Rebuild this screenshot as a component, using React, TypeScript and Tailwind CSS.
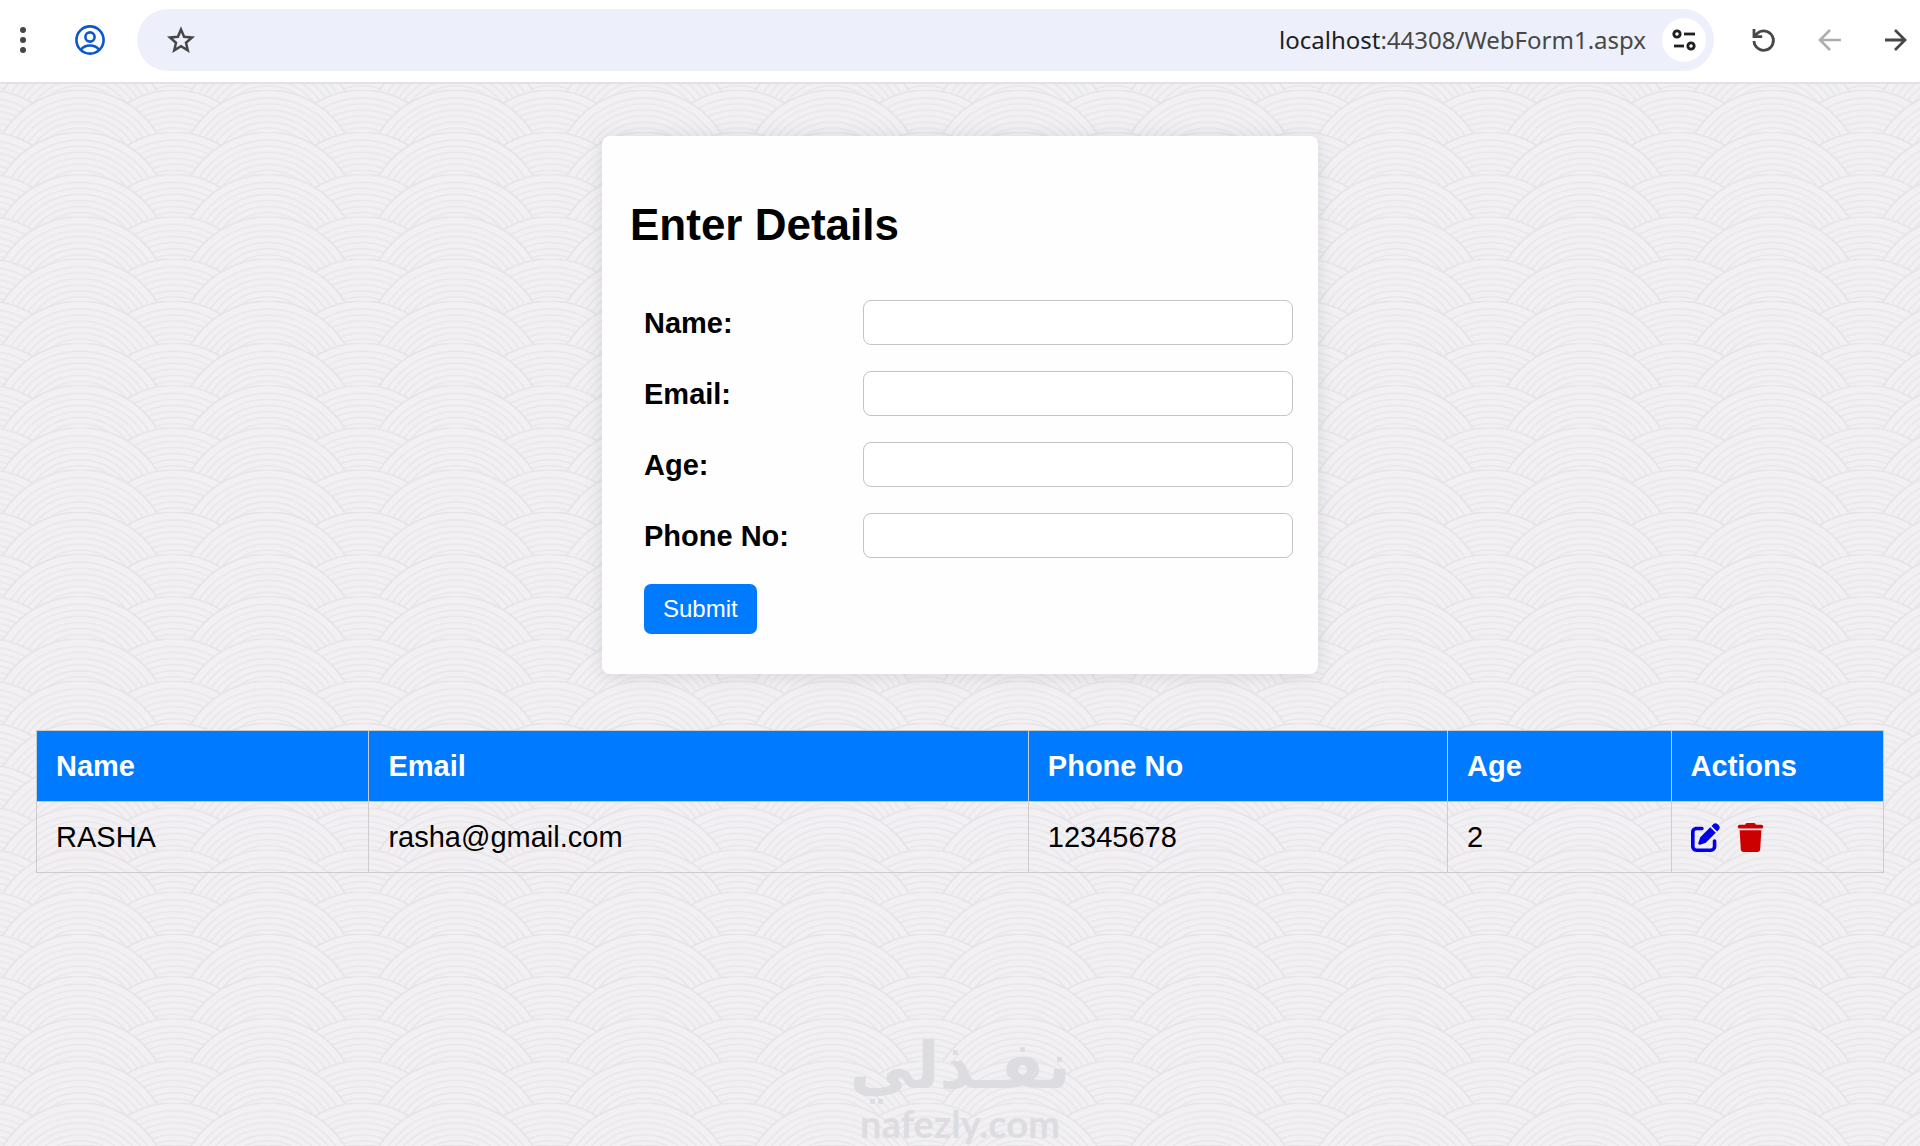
import { useState } from 'react'
import { FaPenToSquare, FaTrash } from 'react-icons/fa6'

const fields = [
  { id: 'name', label: 'Name:', type: 'text' },
  { id: 'email', label: 'Email:', type: 'email' },
  { id: 'age', label: 'Age:', type: 'text' },
  { id: 'phone', label: 'Phone No:', type: 'tel' },
];

const people = [
  { name: 'RASHA', email: 'rasha@gmail.com', phone: '12345678', age: 2 },
];

const TILE_W = 188;
const TILE_H = 42.2;
const RINGS = [90, 82, 76, 70, 64, 58, 52, 46, 40];

const Wave = ({ cx, top }: { cx: number; top: number }) => (
  <g>
    {RINGS.map((r, i) => (
      <circle
        key={r}
        cx={cx}
        cy={top + 90}
        r={r}
        fill={i === 0 ? '#f2f0f2' : 'none'}
        stroke={i === 0 ? '#e4e3e5' : '#e8e7e9'}
        strokeWidth={1.6}
      />
    ))}
  </g>
);

const WaveBackground = () => (
  <svg className="absolute inset-0 w-full h-full" aria-hidden="true">
    <defs>
      <pattern id="waves" x="-14" y="6" width={TILE_W} height={TILE_H} patternUnits="userSpaceOnUse">
        {[-4, -3, -2, -1, 0].map(row => (
          <g key={row}>
            <Wave cx={0} top={row * TILE_H} />
            <Wave cx={TILE_W} top={row * TILE_H} />
            <Wave cx={-TILE_W / 2} top={row * TILE_H} />
            <Wave cx={TILE_W / 2} top={row * TILE_H} />
            <Wave cx={TILE_W * 1.5} top={row * TILE_H} />
          </g>
        ))}
      </pattern>
    </defs>
    <rect width="100%" height="100%" fill="url(#waves)" />
  </svg>
);

const Toolbar = () => (
  <header className="flex items-center h-[84px] pb-[2px] px-2 bg-white border-b-2 border-[#e1e1e3]">
    <button aria-label="Menu" className="flex justify-center w-[30px] shrink-0 cursor-pointer">
      <svg width="8" height="28" viewBox="0 0 8 28" fill="#474747">
        <circle cx="4" cy="4" r="3" /><circle cx="4" cy="14" r="3" /><circle cx="4" cy="24" r="3" />
      </svg>
    </button>
    <button aria-label="Profile" className="ml-9 shrink-0 cursor-pointer">
      <svg width="32" height="32" viewBox="0 0 32 32" fill="none" stroke="#0b57d0" strokeWidth="2.6">
        <circle cx="16" cy="16" r="13.6" />
        <circle cx="16" cy="13" r="4.6" />
        <path d="M7 25.5c2.2-2.7 5.5-4 9-4s6.8 1.3 9 4" />
      </svg>
    </button>

    {/* Address bar */}
    <div className="flex flex-1 items-center h-[62px] ml-[31px] pl-7 pr-2 rounded-full bg-[#edf0fa]">
      <button aria-label="Bookmark" className="shrink-0 cursor-pointer">
        <svg width="32" height="32" viewBox="0 0 32 32" fill="none" stroke="#474747" strokeWidth="2.5" strokeLinejoin="miter">
          <path d="M16 5.5l3.1 7.3 7.9.7-6 5.2 1.8 7.7-6.8-4.1-6.8 4.1 1.8-7.7-6-5.2 7.9-.7z" />
        </svg>
      </button>
      <div className="flex-1 text-right font-['Noto_Sans',sans-serif] text-2xl leading-8 text-[#474747]">
        <span className="text-[#1f1f1f]">localhost</span>:44308/WebForm1.aspx
      </div>
      <button aria-label="Site settings" className="flex items-center justify-center w-11 h-11 ml-4 rounded-full bg-white shrink-0 cursor-pointer">
        <svg width="26" height="24" viewBox="0 0 26 24" fill="none" stroke="#1f1f1f" strokeWidth="2.8">
          <circle cx="6" cy="6" r="3.2" /><path d="M13 6h11" />
          <path d="M3 18h10" /><circle cx="20" cy="18" r="3.2" />
        </svg>
      </button>
    </div>

    <nav className="flex items-center gap-[34px] ml-[34px] shrink-0">
      <button aria-label="Reload" className="cursor-pointer">
        <svg width="32" height="32" viewBox="0 0 32 32" fill="none" stroke="#474747" strokeWidth="2.8">
          <path d="M6 17a9.7 9.7 0 1 0 3.2-7.6L6 12.5" />
          <path d="M6 5v7.6h8.2" />
        </svg>
      </button>
      <button aria-label="Back" className="cursor-pointer">
        <svg width="32" height="32" viewBox="0 0 32 32" fill="none" stroke="#aeaeb0" strokeWidth="2.6">
          <path d="M27 16H6M16 6L6 16l10 10" />
        </svg>
      </button>
      <button aria-label="Forward" className="cursor-pointer">
        <svg width="32" height="32" viewBox="0 0 32 32" fill="none" stroke="#474747" strokeWidth="2.8">
          <path d="M5 16h20M15 6l10 10-10 10" />
        </svg>
      </button>
    </nav>
  </header>
);

const DetailsForm = () => {
  const [values, setValues] = useState<Record<string, string>>({});

  const handleSubmit = (e: React.FormEvent) => {
    e.preventDefault();
    setValues({});
  };

  return (
    <form
      onSubmit={handleSubmit}
      className="w-full max-w-[716px] mx-auto px-7 pt-16 pb-10 rounded-lg bg-[#fefefe] shadow-[0_2px_18px_rgba(0,0,0,0.1)]"
    >
      <h2 className="text-[44px] leading-[50px] font-bold">Enter Details</h2>
      <div className="flex flex-col gap-[26px] mt-[50px] pl-[14px]">
        {fields.map(field => (
          <div key={field.id} className="flex items-center">
            <label htmlFor={field.id} className="w-[219px] shrink-0 text-[29px] leading-8 font-bold">{field.label}</label>
            <input
              id={field.id}
              type={field.type}
              value={values[field.id] ?? ''}
              onChange={e => setValues({ ...values, [field.id]: e.target.value })}
              className="w-[430px] min-w-0 h-[45px] shrink-0 px-3 text-2xl bg-white border border-[#c4c3c7] rounded-lg"
            />
          </div>
        ))}
        <button type="submit" className="self-start h-[50px] px-[19px] text-2xl text-white bg-[#007bff] rounded-[7px] cursor-pointer">
          Submit
        </button>
      </div>
    </form>
  );
};

const PeopleTable = () => (
  <table className="w-full table-fixed border-collapse text-left text-[29px] leading-8">
    <thead>
      <tr className="h-[71px] bg-[#007bff] text-white">
        <th className="w-[18%] px-[19px] border border-[#ccc]">Name</th>
        <th className="w-[35.7%] px-[19px] border border-[#ccc]">Email</th>
        <th className="w-[22.7%] px-[19px] border border-[#ccc]">Phone No</th>
        <th className="w-[12.1%] px-[19px] border border-[#ccc]">Age</th>
        <th className="px-[19px] border border-[#ccc]">Actions</th>
      </tr>
    </thead>
    <tbody>
      {people.map(person => (
        <tr key={person.email} className="h-[71px]">
          <td className="px-[19px] border border-[#ccc]">{person.name}</td>
          <td className="px-[19px] border border-[#ccc]">{person.email}</td>
          <td className="px-[19px] border border-[#ccc]">{person.phone}</td>
          <td className="px-[19px] border border-[#ccc]">{person.age}</td>
          <td className="px-[19px] border border-[#ccc]">
            <div className="flex items-center gap-4">
              <a href="#edit" aria-label="Edit" className="text-[#0000ee]"><FaPenToSquare size={29} /></a>
              <a href="#delete" aria-label="Delete" className="text-[#cc0000]"><FaTrash size={29} /></a>
            </div>
          </td>
        </tr>
      ))}
    </tbody>
  </table>
);

export default function App() {
  return (
    <div className="flex flex-col min-h-screen font-['Liberation_Sans',Arial,sans-serif] text-black bg-[#f2f0f2]">
      <Toolbar />
      <main className="relative flex flex-col flex-1 overflow-hidden">
        <WaveBackground />
        <div className="relative flex flex-col flex-1 gap-14 px-9 pt-[52px]">
          <DetailsForm />
          <PeopleTable />
          <div className="mt-auto text-center text-[#dddce0]">
            <div lang="ar" dir="rtl" className="font-['DejaVu_Sans',sans-serif] font-bold text-[65px] leading-[68px]">نفـذلي</div>
            <div className="font-['Lato',sans-serif] font-bold text-[38px] leading-[46px]">nafezly.com</div>
          </div>
        </div>
      </main>
    </div>
  );
}
